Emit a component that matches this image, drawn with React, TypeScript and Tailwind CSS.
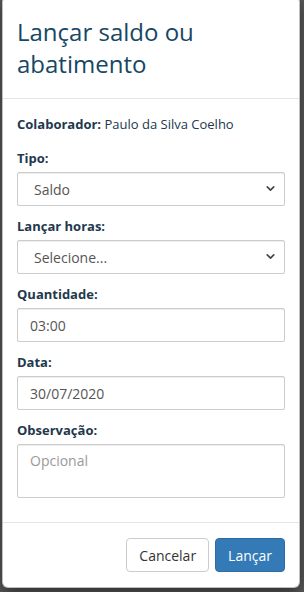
import { ChevronDown } from 'lucide-react'

const font = { fontFamily: '"Open Sans", "Liberation Sans", sans-serif' }

function Label({ children }: { children: React.ReactNode }) {
  return (
    <label className="mb-[4px] block text-[13px] font-bold leading-[20px] text-[#22384d]">
      {children}
    </label>
  )
}

function Select({ value }: { value: string }) {
  return (
    <div className="relative">
      <select
        defaultValue={value}
        className="h-[34px] w-full appearance-none rounded-[2px] border border-[#cccccc] bg-white pl-[16px] pr-8 text-[14px] text-[#555555] shadow-[inset_0_1px_1px_rgba(0,0,0,0.075)] outline-none"
      >
        <option>{value}</option>
      </select>
      <ChevronDown
        className="pointer-events-none absolute right-[8px] top-[10px] h-[13px] w-[13px] text-[#444]"
        strokeWidth={3}
      />
    </div>
  )
}

function Input({ value }: { value: string }) {
  return (
    <input
      defaultValue={value}
      className="h-[34px] w-full rounded-[2px] border border-[#cccccc] bg-white px-[12px] text-[14px] text-[#555555] shadow-[inset_0_1px_1px_rgba(0,0,0,0.075)] outline-none"
    />
  )
}

export default function App() {
  return (
    <div className="h-[592px] w-full overflow-hidden bg-[#5a5a5a]" style={font}>
      <div className="ml-[2px] mt-[-4px] w-[298px] rounded-[6px] border border-[rgba(0,0,0,0.25)] bg-white shadow-[0_5px_15px_rgba(0,0,0,0.5)]">
        <div className="border-b border-[#e5e5e5] px-[14px] pb-[18px] pt-[19px]">
          <h4 className="text-[24px] leading-[32px] text-[#164764]">
            Lançar saldo ou abatimento
          </h4>
        </div>

        <div className="px-[14px] pb-[24px] pt-[15px]">
          <p className="text-[13px] leading-[20px] text-[#22384d]">
            <span className="font-bold">Colaborador:</span> Paulo da Silva Coelho
          </p>

          <div className="mt-[14px]">
            <Label>Tipo:</Label>
            <Select value="Saldo" />
          </div>

          <div className="mt-[10px]">
            <Label>Lançar horas:</Label>
            <Select value="Selecione..." />
          </div>

          <div className="mt-[10px]">
            <Label>Quantidade:</Label>
            <Input value="03:00" />
          </div>

          <div className="mt-[10px]">
            <Label>Data:</Label>
            <Input value="30/07/2020" />
          </div>

          <div className="mt-[10px]">
            <Label>Observação:</Label>
            <textarea
              placeholder="Opcional"
              className="block h-[54px] w-full resize-none rounded-[2px] border border-[#cccccc] bg-white px-[12px] py-[6px] text-[14px] leading-[20px] text-[#555555] shadow-[inset_0_1px_1px_rgba(0,0,0,0.075)] outline-none placeholder:text-[#999999]"
            />
          </div>
        </div>

        <div className="flex justify-end gap-[6px] border-t border-[#e5e5e5] px-[14px] pb-[15px] pt-[15px]">
          <button className="h-[34px] rounded-[4px] border border-[#cccccc] bg-white px-[12px] text-[14px] text-[#333333]">
            Cancelar
          </button>
          <button className="h-[34px] rounded-[4px] border border-[#2e6da4] bg-[#337ab7] px-[12px] text-[14px] text-white">
            Lançar
          </button>
        </div>
      </div>
    </div>
  )
}
